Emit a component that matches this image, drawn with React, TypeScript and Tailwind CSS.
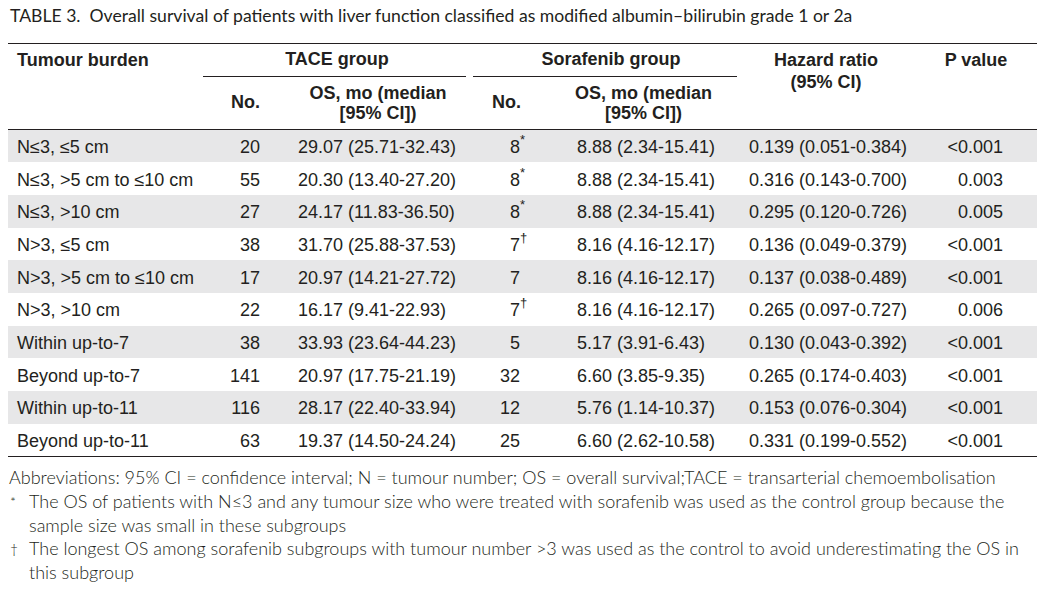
import React from "react";

const ink = "text-[#231f20]";

const rows = [
	["N≤3, ≤5 cm", "20", "29.07 (25.71-32.43)", "8", "*", "8.88 (2.34-15.41)", "0.139 (0.051-0.384)", "<0.001"],
	["N≤3, >5 cm to ≤10 cm", "55", "20.30 (13.40-27.20)", "8", "*", "8.88 (2.34-15.41)", "0.316 (0.143-0.700)", "0.003"],
	["N≤3, >10 cm", "27", "24.17 (11.83-36.50)", "8", "*", "8.88 (2.34-15.41)", "0.295 (0.120-0.726)", "0.005"],
	["N>3, ≤5 cm", "38", "31.70 (25.88-37.53)", "7", "†", "8.16 (4.16-12.17)", "0.136 (0.049-0.379)", "<0.001"],
	["N>3, >5 cm to ≤10 cm", "17", "20.97 (14.21-27.72)", "7", "", "8.16 (4.16-12.17)", "0.137 (0.038-0.489)", "<0.001"],
	["N>3, >10 cm", "22", "16.17 (9.41-22.93)", "7", "†", "8.16 (4.16-12.17)", "0.265 (0.097-0.727)", "0.006"],
	["Within up-to-7", "38", "33.93 (23.64-44.23)", "5", "", "5.17 (3.91-6.43)", "0.130 (0.043-0.392)", "<0.001"],
	["Beyond up-to-7", "141", "20.97 (17.75-21.19)", "32", "", "6.60 (3.85-9.35)", "0.265 (0.174-0.403)", "<0.001"],
	["Within up-to-11", "116", "28.17 (22.40-33.94)", "12", "", "5.76 (1.14-10.37)", "0.153 (0.076-0.304)", "<0.001"],
	["Beyond up-to-11", "63", "19.37 (14.50-24.24)", "25", "", "6.60 (2.62-10.58)", "0.331 (0.199-0.552)", "<0.001"],
];

const cols = "grid grid-cols-[195px_87px_176px_7px_77px_187px_178px_122px]";

export default function App() {
	return (
		<div className={`w-[1041px] h-[594px] bg-white pt-[6px] ${ink}`}>
			{/* caption */}
			<div
				className="pl-[10px] text-[17.6px] leading-[20px]"
				style={{ fontFamily: "Lato, 'Open Sans', sans-serif" }}
			>
				TABLE 3.&nbsp; Overall survival of patients with liver function classified as modified albumin–bilirubin grade 1 or 2a
			</div>

			<div
				className="ml-[8px] w-[1029px] mt-[16.5px] text-[18px]"
				style={{ fontFamily: "'Liberation Sans', Arial, sans-serif" }}
			>
				{/* head */}
				<div className={`${cols} grid-rows-[33px_52px] border-t-[1.5px] border-b-[1.5px] border-[#231f20] font-bold`}>
					<div className="col-start-1 row-start-1 flex items-center pl-[9px]">Tumour burden</div>
					<div className="col-start-2 col-span-2 row-start-1 flex items-center justify-center pl-[5px] border-b border-[#231f20]">
						TACE group
					</div>
					<div className="col-start-5 col-span-2 row-start-1 flex items-center justify-center pl-[12px] border-b border-[#231f20]">
						Sorafenib group
					</div>
					<div className="col-start-7 row-start-1 row-span-2 text-center pt-[5.5px] leading-[22px]">
						Hazard ratio
						<br />
						(95% CI)
					</div>
					<div className="col-start-8 row-start-1 row-span-2 text-center pt-[5.5px] leading-[22px]">P value</div>
					<div className="col-start-2 row-start-2 flex items-center justify-end pr-[30px]">No.</div>
					<div className="col-start-3 row-start-2 flex items-center justify-center text-center leading-[20px]">
						OS, mo (median
						<br />
						[95% CI])
					</div>
					<div className="col-start-5 row-start-2 flex items-center justify-end pr-[29px]">No.</div>
					<div className="col-start-6 row-start-2 flex items-center justify-center text-center leading-[20px]">
						OS, mo (median
						<br />
						[95% CI])
					</div>
				</div>

				{/* body */}
				<div className="border-b-[1.5px] border-[#231f20]">
					{rows.map((r, i) => (
						<div
							key={i}
							className={`${cols} h-[32.7px] items-center pt-[2px] leading-[20px] ${i % 2 === 0 ? "bg-[#e7e7e8]" : "bg-white"}`}
						>
							<div className="pl-[9px] whitespace-nowrap">{r[0]}</div>
							<div className="text-right pr-[30px]">{r[1]}</div>
							<div className="pl-[8px] whitespace-nowrap">{r[2]}</div>
							<div />
							<div className="text-right pr-[30px]">
								<span className="relative">
									{r[3]}
									{r[4] && (
										<span className="absolute left-full top-[-3px] text-[13px] leading-[12px]">{r[4]}</span>
									)}
								</span>
							</div>
							<div className="pl-[27px] whitespace-nowrap">{r[5]}</div>
							<div className="pl-[12px] whitespace-nowrap">{r[6]}</div>
							<div className="text-right pr-[34px]">{r[7]}</div>
						</div>
					))}
				</div>
			</div>

			{/* notes */}
			<div
				className="pl-[9px] pr-[8px] pt-[9px] text-[18px] leading-[23.7px] font-light"
				style={{ fontFamily: "Lato, 'Open Sans', sans-serif" }}
			>
				<div>
					Abbreviations: 95% CI = confidence interval; N = tumour number; OS = overall survival;TACE = transarterial chemoembolisation
				</div>
				<div className="flex">
					<span className="w-[20px] shrink-0 pl-[1px] text-[14px]">*</span>
					<span>
						The OS of patients with N≤3 and any tumour size who were treated with sorafenib was used as the control group because the sample size was small in these subgroups
					</span>
				</div>
				<div className="flex">
					<span className="w-[20px] shrink-0 pl-[1px] text-[14px]">†</span>
					<span>
						The longest OS among sorafenib subgroups with tumour number &gt;3 was used as the control to avoid underestimating the OS in this subgroup
					</span>
				</div>
			</div>
		</div>
	);
}
